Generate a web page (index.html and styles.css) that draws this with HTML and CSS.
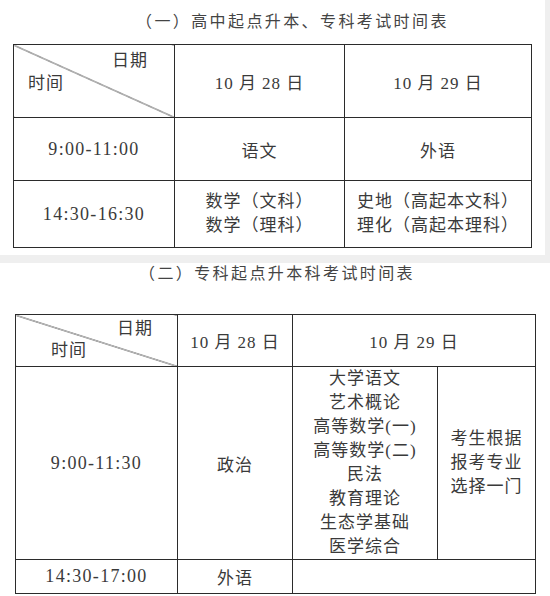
FILE: index.html
```html
<!DOCTYPE html>
<html lang="zh">
<head>
<meta charset="utf-8">
<link rel="stylesheet" href="styles.css">
</head>
<body>
<section class="sheet sheet-one">
  <h2 class="title title-one">（一）高中起点升本、专科考试时间表</h2>
  <table class="grid grid-one">
    <colgroup><col class="c1a"><col class="c1b"><col class="c1c"></colgroup>
    <tr class="r1a">
      <td class="diag diag-one"><div class="diag-in"><span class="lab-date">日期</span><span class="lab-time">时间</span></div></td>
      <td>10 月 28 日</td>
      <td>10 月 29 日</td>
    </tr>
    <tr class="r1b">
      <td class="num">9:00-11:00</td>
      <td>语文</td>
      <td>外语</td>
    </tr>
    <tr class="r1c">
      <td class="num">14:30-16:30</td>
      <td class="lines">数学（文科）<br>数学（理科）</td>
      <td class="lines">史地（高起本文科）<br>理化（高起本理科）</td>
    </tr>
  </table>
</section>
<section class="sheet sheet-two">
  <h2 class="title title-two">（二）专科起点升本科考试时间表</h2>
  <table class="grid grid-two">
    <colgroup><col class="c2a"><col class="c2b"><col class="c2c"><col class="c2d"></colgroup>
    <tr class="r2a">
      <td class="diag diag-two"><div class="diag-in"><span class="lab-date">日期</span><span class="lab-time">时间</span></div></td>
      <td>10 月 28 日</td>
      <td colspan="2">10 月 29 日</td>
    </tr>
    <tr class="r2b">
      <td class="num">9:00-11:30</td>
      <td>政治</td>
      <td class="lines">大学语文<br>艺术概论<br>高等数学(一)<br>高等数学(二)<br>民法<br>教育理论<br>生态学基础<br>医学综合</td>
      <td class="lines">考生根据<br>报考专业<br>选择一门</td>
    </tr>
    <tr class="r2c">
      <td class="num">14:30-17:00</td>
      <td>外语</td>
      <td colspan="2"></td>
    </tr>
  </table>
</section>
</body>
</html>
```
FILE: styles.css
```css
html, body {
  margin: 0;
  padding: 0;
  background: #efefef;
}
body {
  width: 550px;
  height: 596px;
  overflow: hidden;
  font-family: "Liberation Serif", "Noto Sans CJK SC", serif;
  color: #3a3a3a;
}
.sheet {
  background: #fff;
  box-sizing: border-box;
}
.sheet-one {
  width: 545px;
  height: 255px;
  padding-top: 8px;
}
.sheet-two {
  width: 550px;
  height: 333px;
  margin-top: 8px;
}
.title {
  margin: 0;
  font-weight: normal;
  font-family: "Noto Sans CJK SC", sans-serif;
  font-size: 16px;
  letter-spacing: 2.4px;
  white-space: nowrap;
  color: #444;
}
.title-one {
  line-height: 24px;
  padding-left: 136px;
  margin-bottom: 12px;
}
.title-two {
  line-height: 18px;
  padding-left: 139px;
  margin-bottom: 33px;
}
.grid {
  border-collapse: collapse;
  table-layout: fixed;
  font-size: 17px;
  letter-spacing: 1px;
}
.grid td {
  border: 1px solid #2b2b2b;
  padding: 0;
  text-align: center;
  vertical-align: middle;
  white-space: nowrap;
}
.grid td.num {
  font-size: 18px;
  letter-spacing: 1.3px;
}
.grid-one {
  margin-left: 13px;
  width: 518px;
}
.c1a { width: 161px; }
.c1b { width: 170px; }
.c1c { width: 187px; }
.r1a { height: 73px; }
.r1b { height: 63px; }
.r1c { height: 67px; }
.grid-two {
  margin-left: 15px;
  width: 520px;
}
.c2a { width: 162px; }
.c2b { width: 115px; }
.c2c { width: 145px; }
.c2d { width: 98px; }
.r2a { height: 52px; }
.r2b { height: 192px; }
.r2c { height: 34px; }
.lines {
  line-height: 24px;
}
.grid td.diag {
  vertical-align: top;
  background: linear-gradient(to top right, transparent calc(50% - 0.7px), #2b2b2b 50%, transparent calc(50% + 0.7px));
}
.diag-in {
  display: flex;
  flex-direction: column;
  box-sizing: border-box;
  line-height: 20px;
}
.lab-date { align-self: flex-end; }
.lab-time { align-self: flex-start; }
.diag-one .diag-in {
  padding: 6px 26px 0 14px;
  gap: 3px;
}
.diag-two .diag-in {
  padding: 4px 24px 0 35px;
  gap: 2px;
}
```
